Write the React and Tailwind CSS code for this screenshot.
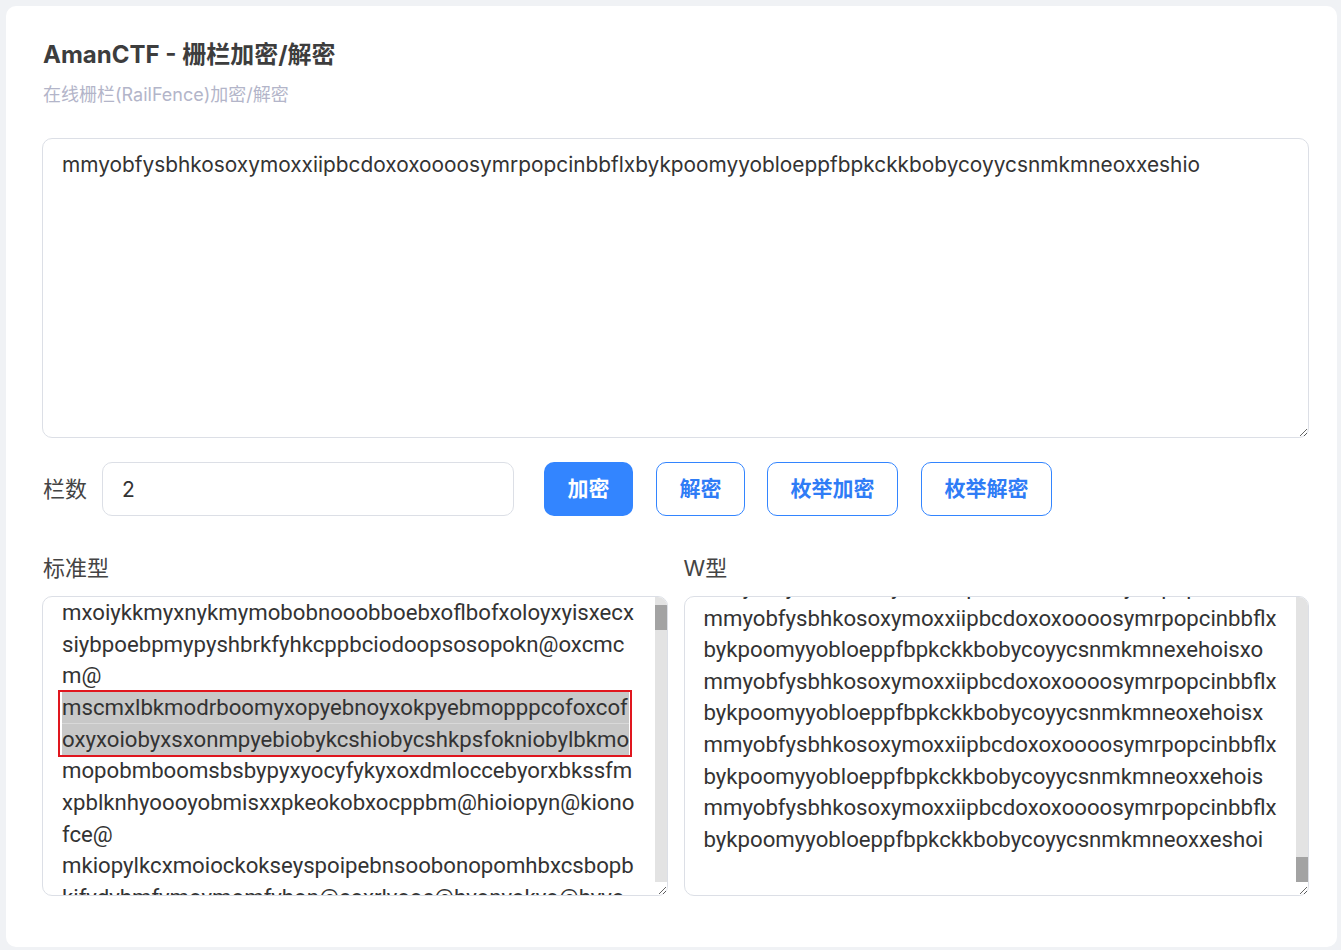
import { useLayoutEffect, useRef, useState } from "react";

const SANS = "font-['Inter','Noto_Sans_CJK_SC',sans-serif]";
const BOX = "font-['Roboto','Noto_Sans_CJK_SC',sans-serif]";

const cipher =
  "mmyobfysbhkosoxymoxxiipbcdoxoxoooosymrpopcinbbflxbykpoomyyobloeppfbpkckkbobycoyycsnmkmneoxxeshio";

const standardTop = [
  "oyxmkbpcfmsnoyexblkxobmpyocsokkhbpxyoopcmisyyfb",
  "kxmmbcooxioklpyyspfnyeboomhxocokxmbeyckiyspbosfo",
  "xbnoyxkosoyb@",
];

const standardShown = [
  "mxoiykkmyxnykmymobobnooobboebxoflbofxoloyxyisxecx",
  "siybpoebpmypyshbrkfyhkcppbciodoopsosopokn@oxcmc",
  "m@",
];

const standardHighlight = [
  "mscmxlbkmodrboomyxopyebnoyxokpyebmopppcofoxcof",
  "oxyxoiobyxsxonmpyebiobykcshiobycshkpsfokniobylbkmo",
];

const standardRest = [
  "mopobmboomsbsbypyxyocyfykyxoxdmloccebyorxbkssfm",
  "xpblknhyoooyobmisxxpkeokobxocppbm@hioiopyn@kiono",
  "fce@",
  "mkiopylkcxmoiockokseyspoipebnsoobonopomhbxcsbopb",
  "kifydyhmfymoymomfyhon@coxrlyooc@hyonyokyo@hyyo",
  "mycoxbofmboykpsyxpokbcmoyhpyoocxlsisbmkeixnopo",
  "ebyxoykxfhcmboyskpkdpynombcrosfoxlopobcmkyiexom",
  "xxs@",
];

const wTop = [
  "bykpoomyyobloeppfbpkckkbobycoyycsnmkmneoxhisxeo",
  "mmyobfysbhkosoxymoxxiipbcdoxoxoooosymrpopcinbbflx",
  "bykpoomyyobloeppfbpkckkbobycoyycsnmkmnxoehisoxe",
  "mmyobfysbhkosoxymoxxiipbcdoxoxoooosymrpopcinbbflx",
];

const wShown = [
  "mmyobfysbhkosoxymoxxiipbcdoxoxoooosymrpopcinbbflx",
  "bykpoomyyobloeppfbpkckkbobycoyycsnmkmnexehoisxo",
  "mmyobfysbhkosoxymoxxiipbcdoxoxoooosymrpopcinbbflx",
  "bykpoomyyobloeppfbpkckkbobycoyycsnmkmneoxehoisx",
  "mmyobfysbhkosoxymoxxiipbcdoxoxoooosymrpopcinbbflx",
  "bykpoomyyobloeppfbpkckkbobycoyycsnmkmneoxxehois",
  "mmyobfysbhkosoxymoxxiipbcdoxoxoooosymrpopcinbbflx",
  "bykpoomyyobloeppfbpkckkbobycoyycsnmkmneoxxeshoi",
];

const fillLeft = [];
for (let i = 0; i < 10; i++) fillLeft.push(...standardRest);
const fillRight = [];
for (let i = 0; i < 20; i++) fillRight.push(...wTop);

function Line({ text }) {
  return <div className="whitespace-nowrap">{text}</div>;
}

// the browser hides real scrollbars, so the track is drawn beside the text
function Track({ atEnd }) {
  return (
    <div className="flex w-[12px] shrink-0 flex-col">
      <div
        className={`flex flex-1 flex-col bg-[#e3e3e3] ${
          atEnd ? "justify-end" : "justify-start pt-[8px]"
        }`}
      >
        <div className="h-[25px] bg-[#a3a3a3]" />
      </div>
      <div className="h-[13px] bg-white" />
    </div>
  );
}

export default function App() {
  const [rails, setRails] = useState("2");
  const [input, setInput] = useState(cipher);
  const leftRef = useRef(null);
  const rightRef = useRef(null);

  useLayoutEffect(() => {
    if (leftRef.current) leftRef.current.scrollTop = 105;
    if (rightRef.current) rightRef.current.scrollTop = rightRef.current.scrollHeight;
  }, []);

  return (
    <div className={`min-h-[950px] bg-[#f0f2f5] pl-[6px] pt-[6px] pr-[4px] ${SANS}`}>
      <div className="min-h-[941px] rounded-[10px] bg-white pl-[37px] pr-[28px] pt-[34px] pb-[50px]">
        <h1 className="text-[24px] font-bold leading-[30px] text-[#3d3d3d]">
          AmanCTF - 栅栏加密/解密
        </h1>
        <p className="mt-[13px] text-[18px] leading-[24px] text-[#b3b5c9]">
          在线栅栏(RailFence)加密/解密
        </p>

        <textarea
          value={input}
          onChange={(e) => setInput(e.target.value)}
          className="-ml-[1px] mt-[31px] block h-[300px] w-[calc(100%+1px)] resize-y rounded-[10px] border border-[#dcdfe6] px-[19px] pt-[10px] text-[20.85px] leading-[31.5px] text-[#333] outline-none"
        />

        <div className="mt-[24px] flex items-center">
          <span className="text-[22px] text-[#444]">栏数</span>
          <input
            value={rails}
            onChange={(e) => setRails(e.target.value)}
            className="ml-[15px] h-[54px] w-[412px] rounded-[10px] border border-[#dcdfe6] pl-[19px] text-[21px] text-[#333] outline-none"
          />
          <button className="ml-[30px] h-[54px] w-[89px] rounded-[10px] bg-[#3385ff] text-[21px] font-bold text-white">
            加密
          </button>
          <button className="ml-[23px] h-[54px] w-[89px] rounded-[10px] border border-[#3385ff] bg-white text-[21px] font-bold text-[#2f7cf6]">
            解密
          </button>
          <button className="ml-[22px] h-[54px] w-[131px] rounded-[10px] border border-[#3385ff] bg-white text-[21px] font-bold text-[#2f7cf6]">
            枚举加密
          </button>
          <button className="ml-[23px] h-[54px] w-[131px] rounded-[10px] border border-[#3385ff] bg-white text-[21px] font-bold text-[#2f7cf6]">
            枚举解密
          </button>
        </div>

        <div className="-ml-[1px] mt-[38px] grid grid-cols-2 gap-x-[16px]">
          <div>
            <div className="mb-[14px] pl-[1px] text-[22px] leading-[28px] text-[#444]">标准型</div>
            <div className="flex h-[300px] resize-y overflow-hidden rounded-[10px] border border-[#dcdfe6]">
              <div
                ref={leftRef}
                className={`flex-1 overflow-hidden pl-[19px] pt-[10px] pb-[10px] text-[22.2px] leading-[31.65px] text-[#333] ${BOX}`}
              >
                {standardTop.map((t, i) => (
                  <Line key={"t" + i} text={t} />
                ))}
                {standardShown.map((t, i) => (
                  <Line key={"s" + i} text={t} />
                ))}
                <div className="-ml-[2px] w-fit pl-[2px] pr-[1px] outline-2 outline-solid outline-[#e0161e]">
                  {standardHighlight.map((t, i) => (
                    <div
                      key={"h" + i}
                      className={`whitespace-nowrap bg-[#c8c8c8] ${
                        i === 0 ? "shadow-[inset_0_-1px_0_#d9d9d9]" : ""
                      }`}
                    >
                      {t}
                    </div>
                  ))}
                </div>
                {standardRest.map((t, i) => (
                  <Line key={"r" + i} text={t} />
                ))}
                {fillLeft.map((t, i) => (
                  <Line key={"f" + i} text={t} />
                ))}
              </div>
              <Track atEnd={false} />
            </div>
          </div>

          <div>
            <div className="mb-[14px] text-[22px] leading-[28px] text-[#444]">W型</div>
            <div className="flex h-[300px] resize-y overflow-hidden rounded-[10px] border border-[#dcdfe6]">
              <div
                ref={rightRef}
                className={`flex-1 overflow-hidden pl-[19px] pt-[10px] pb-[39px] text-[22.2px] leading-[31.65px] text-[#333] ${BOX}`}
              >
                {fillRight.map((t, i) => (
                  <Line key={"w" + i} text={t} />
                ))}
                {wShown.map((t, i) => (
                  <Line key={"v" + i} text={t} />
                ))}
              </div>
              <Track atEnd={true} />
            </div>
          </div>
        </div>
      </div>
    </div>
  );
}
